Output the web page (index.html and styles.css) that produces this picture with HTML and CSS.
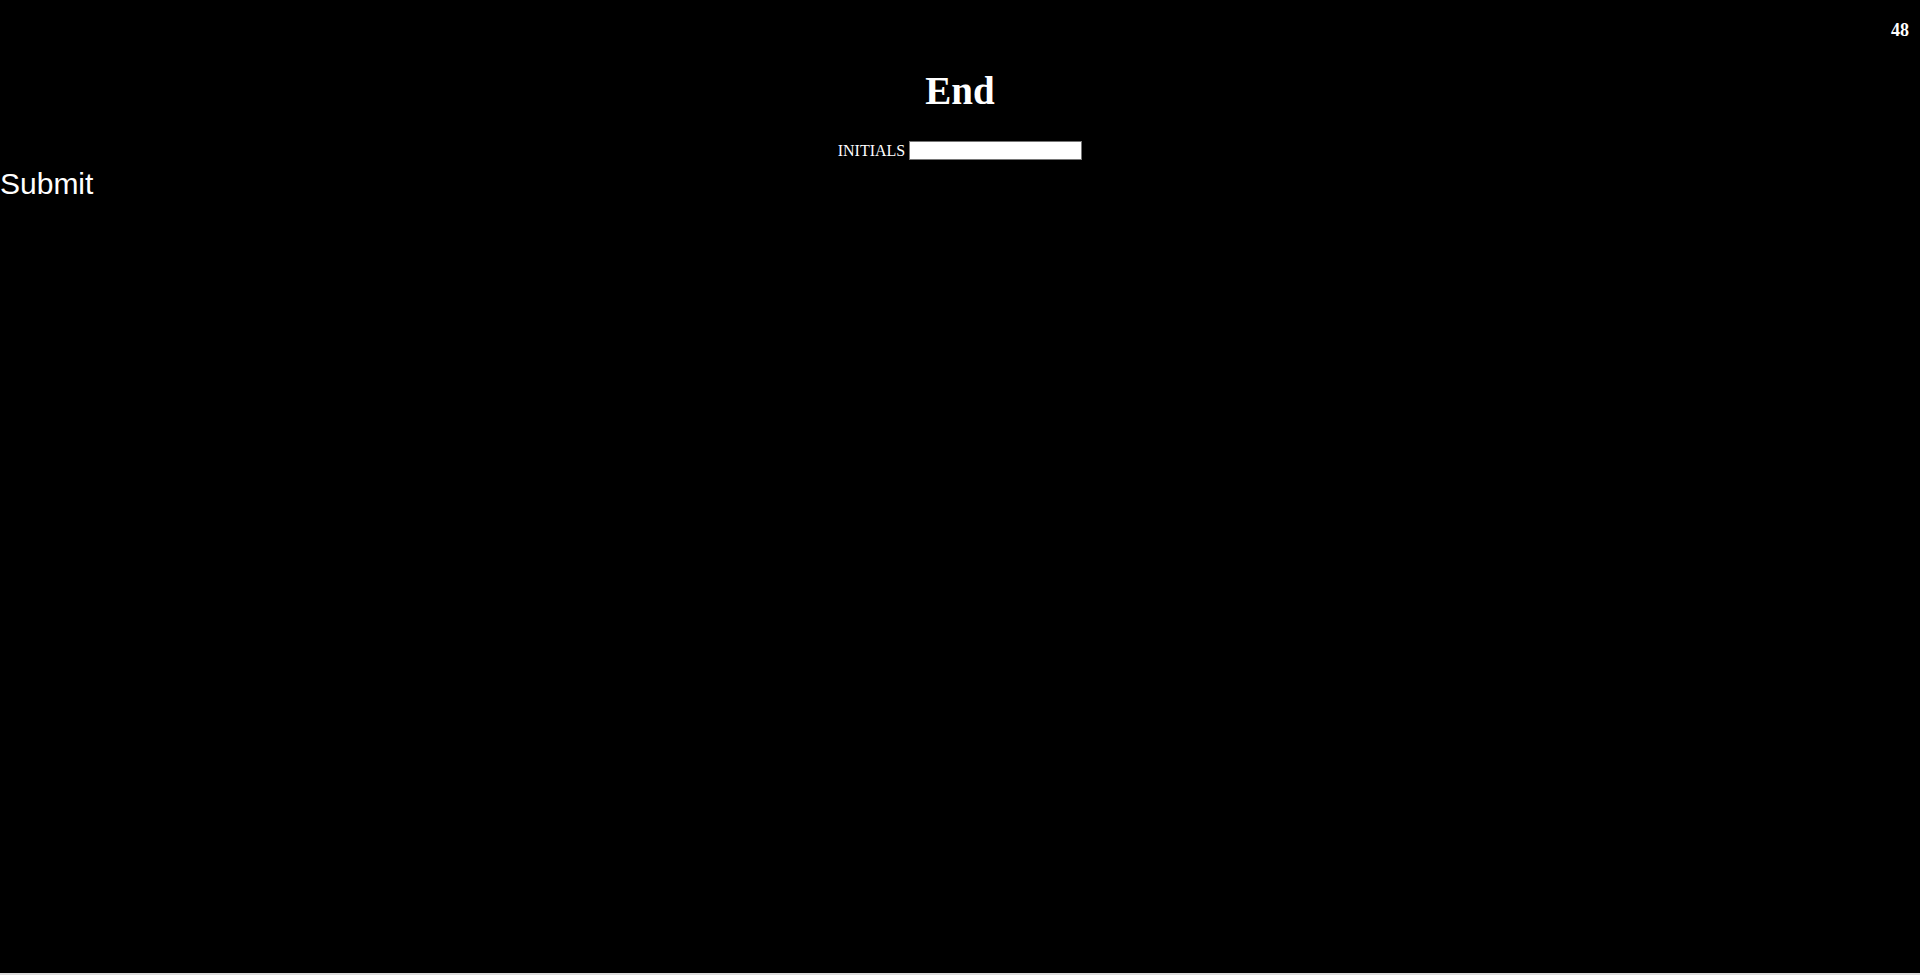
FILE: index.html
```html
<!DOCTYPE html>
<html lang="en">
<head>
<meta charset="utf-8">
<title>End</title>
<link rel="stylesheet" href="styles.css">
</head>
<body>
<div class="screen">
  <div class="counter">48</div>
  <h1 class="title">End</h1>
  <div class="initials-row">
    <label class="initials-label" for="initials">INITIALS</label>
    <input class="initials-input" id="initials" type="text">
  </div>
  <div class="submit">Submit</div>
</div>
</body>
</html>
```

FILE: styles.css
```css
html {
  background: #dcdcdc;
}

body {
  margin: 0;
}

.screen {
  position: relative;
  height: 973px;
  background: #000;
  color: #fff;
  font-family: "Liberation Serif", "Times New Roman", serif;
  padding-top: 68px;
  box-sizing: border-box;
}

.counter {
  position: absolute;
  top: 20px;
  right: 11px;
  font-size: 18px;
  font-weight: bold;
}

.title {
  margin: 0;
  text-align: center;
  font-size: 39px;
  line-height: 45px;
  font-weight: bold;
}

.initials-row {
  margin-top: 28px;
  display: flex;
  justify-content: center;
  align-items: center;
  gap: 4px;
  height: 19px;
}

.initials-label {
  font-size: 16px;
}

.initials-input {
  width: 173px;
  height: 19px;
  box-sizing: border-box;
  margin: 0;
  padding: 0 2px;
  border: 1px solid #767676;
  background: #fff;
  font-size: 13px;
}

.submit {
  margin-top: 7px;
  font-family: "Liberation Sans", Arial, sans-serif;
  font-size: 30px;
  color: #fff;
}
```
